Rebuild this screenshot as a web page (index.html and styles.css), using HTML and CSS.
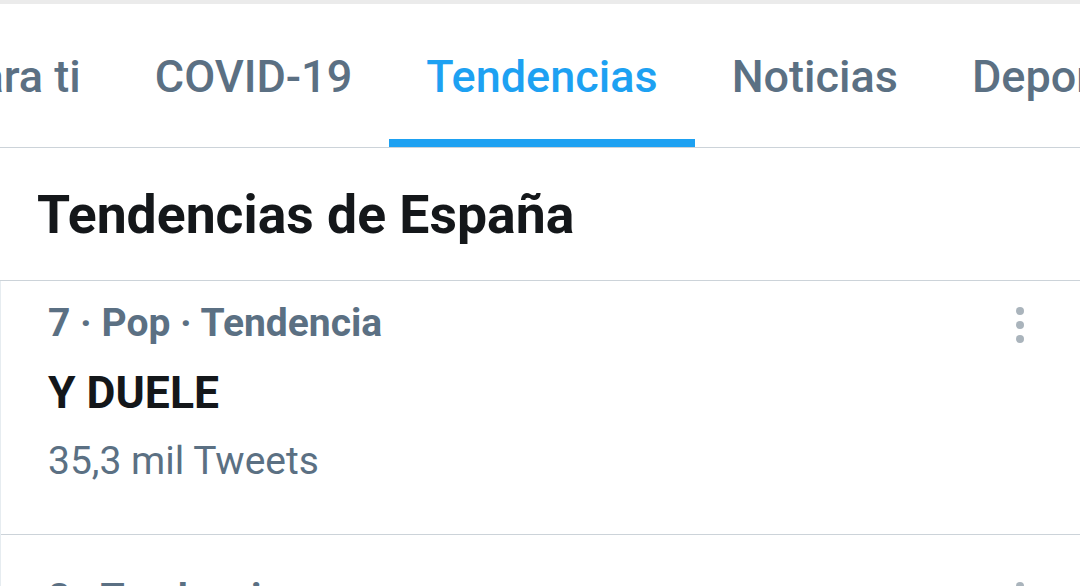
FILE: index.html
```html
<!DOCTYPE html>
<html lang="es">
<head>
<meta charset="UTF-8" />
<meta name="viewport" content="width=device-width, initial-scale=1" />
<title>Explorar - Tendencias</title>
<link rel="stylesheet" href="styles.css">
</head>
<body>
  <div class="status-strip"></div>
  <nav class="tabs">
    <div class="tabs-track">
      <a class="tab" href="#">Para ti</a>
      <a class="tab" href="#">COVID-19</a>
      <a class="tab active" href="#">Tendencias</a>
      <a class="tab" href="#">Noticias</a>
      <a class="tab" href="#">Deportes</a>
    </div>
  </nav>
  <section class="section-title">
    <h2>Tendencias de España</h2>
  </section>
  <div class="trends">
    <div class="trend">
      <div class="trend-body">
        <div class="trend-meta">7 · Pop · Tendencia</div>
        <div class="trend-name">Y DUELE</div>
        <div class="trend-count">35,3 mil Tweets</div>
      </div>
      <button class="more" aria-label="Más opciones"><span></span><span></span><span></span></button>
    </div>
    <div class="trend next">
      <div class="trend-body">
        <div class="trend-meta">8 · Tendencia</div>
        <div class="trend-name">Madrid</div>
      </div>
      <button class="more" aria-label="Más opciones"><span></span><span></span><span></span></button>
    </div>
  </div>
</body>
</html>
```

FILE: styles.css
```css
html, body {
  margin: 0; padding: 0;
  height: 100%;
  background: #fff;
  font-family: Roboto, "Noto Sans", "Liberation Sans", sans-serif;
  color: #14171a;
  overflow: hidden;
}
.status-strip {
  height: 4px;
  background: #ebebeb;
}
.tabs {
  border-bottom: 1px solid #ccd3d9;
  overflow: hidden;
}
.tabs-track {
  display: flex;
  margin-left: -86px;
  white-space: nowrap;
}
.tab {
  box-sizing: border-box;
  height: 143px;
  display: flex;
  align-items: center;
  padding: 10px 37px 0;
  border-bottom: 8px solid transparent;
  font-size: 45px;
  font-weight: 500;
  color: #5b7083;
  text-decoration: none;
}
.tab.active {
  color: #1da1f2;
  border-bottom-color: #1da1f2;
}
.section-title {
  height: 132px;
  display: flex;
  align-items: center;
  padding-left: 37px;
  border-bottom: 1px solid #ccd3d9;
}
.section-title h2 {
  margin: 0;
  font-size: 53.5px;
  font-weight: 700;
  color: #14171a;
}
.trends {
  border-left: 1px solid #e6ecf0;
}
.trend {
  display: flex;
  padding: 18px 56px 49px 47px;
  border-bottom: 1px solid #ccd3d9;
}
.trend.next {
  padding-top: 39px;
}
.trend-body {
  flex: 1;
}
.trend-meta {
  font-size: 39px;
  line-height: 48px;
  font-weight: 700;
  color: #5b7083;
}
.trend-name {
  margin-top: 18px;
  font-size: 44.5px;
  line-height: 56px;
  font-weight: 700;
  color: #14171a;
}
.trend-count {
  margin-top: 16px;
  font-size: 39px;
  line-height: 48px;
  color: #5b7083;
}
.more {
  display: flex;
  flex-direction: column;
  gap: 6px;
  margin-top: 8px;
  padding: 0;
  height: 36px;
  border: none;
  background: none;
}
.more span {
  display: block;
  width: 8px;
  height: 8px;
  border-radius: 50%;
  background: #aab4bc;
}
```
